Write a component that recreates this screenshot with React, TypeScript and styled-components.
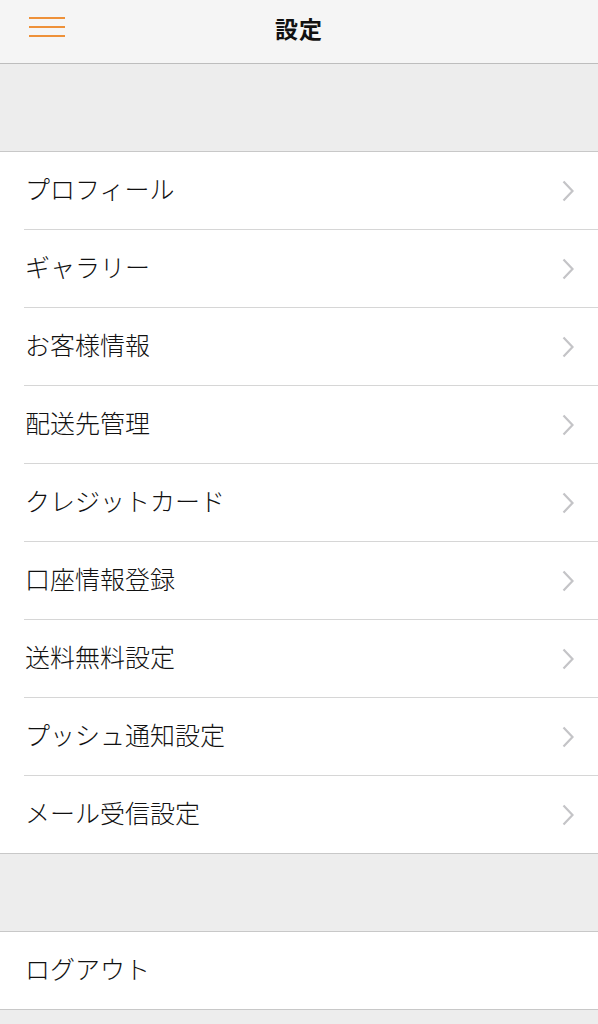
import React from 'react';
import styled, { createGlobalStyle } from 'styled-components';

const GlobalStyle = createGlobalStyle`
    html, body {
        margin: 0;
        padding: 0;
        background: #ededed;
    }
    body {
        font-family: "Noto Sans CJK JP", "Noto Sans", sans-serif;
        color: #111;
    }
`;

const Page = styled.div`
    width: 598px;
    min-height: 1024px;
    background: #ededed;
`;

const Header = styled.header`
    position: relative;
    display: flex;
    align-items: center;
    justify-content: center;
    height: 63px;
    background: #f5f5f5;
    border-bottom: 1px solid #bdbdbd;
`;

const MenuButton = styled.button`
    position: absolute;
    left: 29px;
    top: 17px;
    width: 36px;
    height: 20px;
    padding: 0;
    border: none;
    background: transparent;
    display: flex;
    flex-direction: column;
    justify-content: space-between;
`;

const MenuLine = styled.span`
    display: block;
    height: 2px;
    width: 36px;
    background: #ee9139;
`;

const Title = styled.h1`
    margin: 0 0 7px;
    font-size: 23px;
    font-weight: 700;
    letter-spacing: 1px;
    color: #111;
`;

const Spacer = styled.div<{ size: number }>`
    height: ${props => props.size}px;
    border-bottom: 1px solid #c8c8c8;
`;

const List = styled.ul`
    list-style: none;
    margin: 0;
    padding: 0;
    background: #fff;
    border-bottom: 1px solid #c8c8c8;
`;

const Item = styled.li<{ last?: boolean }>`
    display: flex;
    align-items: center;
    justify-content: space-between;
    margin-left: 24px;
    padding-right: 24px;
    box-sizing: border-box;
    height: ${props => (props.last ? '77px' : '78px')};
    border-bottom: ${props => (props.last ? 'none' : '1px solid #d6d6d6')};
`;

const Label = styled.span`
    font-size: 25px;
    font-weight: 300;
    color: #111;
    padding-left: 1px;
    margin-bottom: 5px;
`;

const Chevron = () => (
    <svg width="12" height="22" viewBox="0 0 12 22" fill="none">
        <path d="M1.5 1.5 L10.5 11 L1.5 20.5" stroke="#c4c4c7" strokeWidth="2.2" />
    </svg>
);

const items = [
    'プロフィール',
    'ギャラリー',
    'お客様情報',
    '配送先管理',
    'クレジットカード',
    '口座情報登録',
    '送料無料設定',
    'プッシュ通知設定',
    'メール受信設定',
];

const App = () => (
    <Page>
        <GlobalStyle />
        <Header>
            <MenuButton aria-label="menu">
                <MenuLine />
                <MenuLine />
                <MenuLine />
            </MenuButton>
            <Title>設定</Title>
        </Header>
        <Spacer size={87} />
        <List>
            {items.map((label, i) => (
                <Item key={label} last={i === items.length - 1}>
                    <Label>{label}</Label>
                    <Chevron />
                </Item>
            ))}
        </List>
        <Spacer size={77} />
        <List>
            <Item last>
                <Label>ログアウト</Label>
            </Item>
        </List>
    </Page>
);

export default App;
